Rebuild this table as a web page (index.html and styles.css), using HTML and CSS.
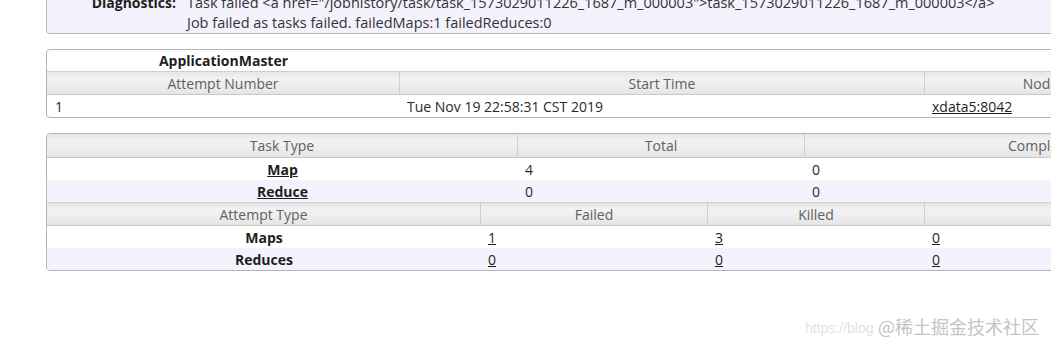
FILE: index.html
```html
<!DOCTYPE html>
<html lang="en">
<head>
<meta charset="utf-8">
<title>Job</title>
<link rel="stylesheet" href="styles.css">
</head>
<body>
<div class="page">
  <div class="info">
    <div class="info-row">
      <div class="info-label">Diagnostics:</div>
      <div class="info-value">
        <div>Task failed &lt;a href="/jobhistory/task/task_1573029011226_1687_m_000003"&gt;task_1573029011226_1687_m_000003&lt;/a&gt;</div>
        <div>Job failed as tasks failed. failedMaps:1 failedReduces:0</div>
      </div>
    </div>
  </div>

  <div class="panel">
    <div class="row am caption">
      <div class="cell title">ApplicationMaster</div>
      <div class="cell"></div>
      <div class="cell"></div>
      <div class="cell"></div>
    </div>
    <div class="row am head bordered">
      <div class="cell">Attempt Number</div>
      <div class="cell">Start Time</div>
      <div class="cell">Node</div>
      <div class="cell">Logs</div>
    </div>
    <div class="row am data">
      <div class="cell">1</div>
      <div class="cell">Tue Nov 19 22:58:31 CST 2019</div>
      <div class="cell"><a class="lnk" href="#">xdata5:8042</a></div>
      <div class="cell"><a class="lnk" href="#">logs</a></div>
    </div>
  </div>

  <div class="panel">
    <div class="row tasks head">
      <div class="cell">Task Type</div>
      <div class="cell">Total</div>
      <div class="cell">Complete</div>
    </div>
    <div class="row tasks data">
      <div class="cell name"><a class="lnk" href="#">Map</a></div>
      <div class="cell">4</div>
      <div class="cell">0</div>
    </div>
    <div class="row tasks data alt">
      <div class="cell name"><a class="lnk" href="#">Reduce</a></div>
      <div class="cell">0</div>
      <div class="cell">0</div>
    </div>
    <div class="row attempts head bordered">
      <div class="cell">Attempt Type</div>
      <div class="cell">Failed</div>
      <div class="cell">Killed</div>
      <div class="cell">Successful</div>
    </div>
    <div class="row attempts data">
      <div class="cell name">Maps</div>
      <div class="cell"><a class="lnk" href="#">1</a></div>
      <div class="cell"><a class="lnk" href="#">3</a></div>
      <div class="cell"><a class="lnk" href="#">0</a></div>
    </div>
    <div class="row attempts data alt">
      <div class="cell name">Reduces</div>
      <div class="cell"><a class="lnk" href="#">0</a></div>
      <div class="cell"><a class="lnk" href="#">0</a></div>
      <div class="cell"><a class="lnk" href="#">0</a></div>
    </div>
  </div>
</div>

<div class="watermark">
  <span class="wm-url">https://blog</span>
  <span class="wm-brand">@稀土掘金技术社区</span>
</div>
</body>
</html>
```

FILE: styles.css
```css
html, body {
  margin: 0;
  padding: 0;
}

body {
  width: 1051px;
  height: 349px;
  overflow: hidden;
  position: relative;
  background: #ffffff;
  font-family: "Open Sans", "Noto Sans", "Noto Sans CJK SC", sans-serif;
  font-size: 14px;
  color: #333333;
}

.page {
  padding-left: 46px;
  width: 1229px;
}

/* Diagnostics box */
.info {
  margin-top: -9px;
  padding-top: 1px;
  border: 1px solid #b8b8c0;
  border-radius: 4px;
  background: #f4f2fc;
}

.info-row {
  display: grid;
  grid-template-columns: 129px 1fr;
  column-gap: 11px;
}

.info-label {
  text-align: right;
  font-weight: bold;
  color: #1e1e1e;
  line-height: 20px;
}

.info-value {
  line-height: 20px;
  font-size: 14.5px;
  color: #333333;
  white-space: nowrap;
}

/* Panels */
.panel {
  margin-top: 15px;
  border: 1px solid #b4b4b4;
  border-radius: 4px;
  overflow: hidden;
  background: #ffffff;
}

.row {
  display: grid;
  align-items: center;
  height: 22px;
  box-sizing: border-box;
}

.row.am { grid-template-columns: 353px 525px 232px 1fr; }
.row.tasks { grid-template-columns: 471px 287px 1fr; }
.row.attempts { grid-template-columns: 434px 227px 217px 1fr; }

.cell {
  height: 100%;
  display: flex;
  align-items: center;
  padding: 0 7px;
  white-space: nowrap;
  box-sizing: border-box;
}

.caption { height: 21px; }
.caption .title {
  justify-content: center;
  font-weight: bold;
  color: #1e1e1e;
}

.head {
  height: 24px;
  border-bottom: 1px solid #c8c8c8;
  background: linear-gradient(to bottom, #e6e6e6 0%, #f2f2f2 30%, #eeeeee 60%, #e5e5e5 100%);
  color: #606060;
}

.head.bordered {
  border-top: 1px solid #cfcfcf;
}

.head .cell {
  justify-content: center;
  border-right: 1px solid #d0d0d0;
}

.head .cell:last-child {
  border-right: none;
}

.data { color: #2a2a2a; }
.data.alt { background: #f4f2fc; }

.data .name {
  justify-content: center;
  font-weight: bold;
  color: #1e1e1e;
}

.am.data .cell:first-child { padding-left: 8px; }

.lnk {
  color: #1e1e1e;
  text-decoration: underline;
}

/* Watermark overlay */
.watermark {
  position: absolute;
  left: 805px;
  top: 314px;
  height: 24px;
  width: 240px;
}

.wm-url {
  position: absolute;
  left: 0;
  top: 6px;
  font-family: "Liberation Sans", sans-serif;
  font-size: 14px;
  color: #e2e2e2;
  white-space: nowrap;
}

.wm-brand {
  position: absolute;
  left: 73px;
  top: 0;
  font-family: "Noto Sans CJK SC", sans-serif;
  font-size: 18px;
  line-height: 24px;
  color: #c4c4c4;
  white-space: nowrap;
  text-shadow: 0 0 2px #ffffff, 0 0 2px #ffffff;
}
```
